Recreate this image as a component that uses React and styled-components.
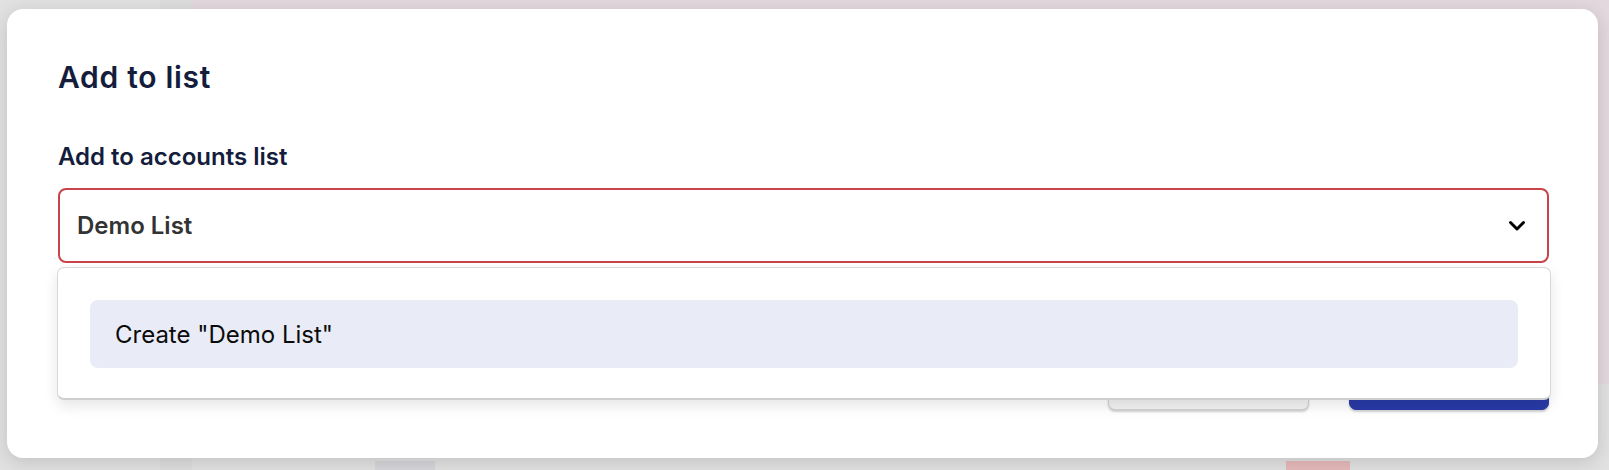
import React from "react";
import styled, { createGlobalStyle } from "styled-components";

const GlobalStyle = createGlobalStyle`
  html, body {
    margin: 0;
    padding: 0;
    background: #e1e1e1;
  }
  body {
    font-family: Inter, "Noto Sans", "Liberation Sans", sans-serif;
  }
  * { box-sizing: border-box; }
`;

const Backdrop = styled.div`
  position: relative;
  width: 100vw;
  height: 100vh;
  padding: 9px 11px 12px 7px;
  overflow: hidden;
  background-color: #e1e1e1;
  background-image:
    linear-gradient(#e3d8dd, #e3d8dd),
    linear-gradient(#dddddd, #dddddd),
    linear-gradient(#d6d6da, #d6d6da),
    linear-gradient(#e6b9ba, #e6b9ba);
  background-repeat: no-repeat;
  background-position:
    192px 0,
    160px 0,
    375px 461px,
    1286px 461px;
  background-size:
    calc(100% - 192px) 384px,
    32px 100%,
    60px 20px,
    64px 20px;
`;

const Modal = styled.div`
  position: relative;
  height: 100%;
  background: #ffffff;
  border-radius: 16px;
  box-shadow: 0 4px 18px rgba(0, 0, 0, 0.14);
  padding: 50px 49px 48px 51px;
  display: flex;
  flex-direction: column;
`;

const Title = styled.h2`
  margin: 0;
  font-size: 30px;
  line-height: 36px;
  font-weight: 600;
  letter-spacing: 0.7px;
  color: #141d3c;
`;

const Field = styled.div`
  margin-top: 47px;
  display: flex;
  flex-direction: column;
  gap: 17px;
`;

const Label = styled.label`
  font-size: 24px;
  line-height: 29px;
  font-weight: 600;
  color: #141d3c;
`;

const SelectWrap = styled.div`
  position: relative;
`;

const SelectBox = styled.div`
  height: 75px;
  border: 2px solid #c8434a;
  border-radius: 8px;
  display: flex;
  align-items: center;
  justify-content: space-between;
  padding: 0 21px 0 17px;
  background: #fff;
`;

const SelectValue = styled.span`
  font-size: 24px;
  font-weight: 600;
  color: #333333;
`;

const Menu = styled.div`
  position: absolute;
  top: calc(100% + 4px);
  left: -1px;
  right: -2px;
  z-index: 5;
  background: #fff;
  border: 1px solid #d9d9d9;
  border-bottom: 2px solid #cfcfcf;
  border-radius: 7px;
  box-shadow: 0 6px 14px rgba(0, 0, 0, 0.1);
  padding: 32px 32px 30px;
`;

const Option = styled.div`
  height: 68px;
  display: flex;
  align-items: center;
  padding: 0 25px;
  border-radius: 8px;
  background: ${(p) => (p.$active ? "#e9ebf6" : "transparent")};
  font-size: 24px;
  font-weight: 400;
  color: #0b0b0b;
`;

const Footer = styled.div`
  margin-top: auto;
  display: flex;
  justify-content: flex-end;
  gap: 40px;
`;

const Button = styled.button`
  width: ${(p) => p.$w}px;
  height: 56px;
  border-radius: 7px;
  font-family: inherit;
  font-size: 22px;
  font-weight: 600;
  border: 1px solid ${(p) => (p.$primary ? "#293aa7" : "#d2d2d2")};
  background: ${(p) => (p.$primary ? "#293aa7" : "#f3f3f3")};
  color: ${(p) => (p.$primary ? "#fff" : "#333")};
  box-shadow: 0 2px 2px rgba(0, 0, 0, 0.18);
`;

const Chevron = () => (
  <svg width="18" height="12" viewBox="0 0 18 12" fill="none">
    <path
      d="M2.5 2.5 L9 9 L15.5 2.5"
      stroke="#000"
      strokeWidth="3"
      strokeLinecap="round"
      strokeLinejoin="round"
    />
  </svg>
);

export default function App() {
  return (
    <>
      <GlobalStyle />
      <Backdrop>
        <Modal>
          <Title>Add to list</Title>
          <Field>
            <Label>Add to accounts list</Label>
            <SelectWrap>
              <SelectBox>
                <SelectValue>Demo List</SelectValue>
                <Chevron />
              </SelectBox>
              <Menu>
                <Option $active>Create "Demo List"</Option>
              </Menu>
            </SelectWrap>
          </Field>
          <Footer>
            <Button $w={201}>Cancel</Button>
            <Button $w={200} $primary>
              Add
            </Button>
          </Footer>
        </Modal>
      </Backdrop>
    </>
  );
}
